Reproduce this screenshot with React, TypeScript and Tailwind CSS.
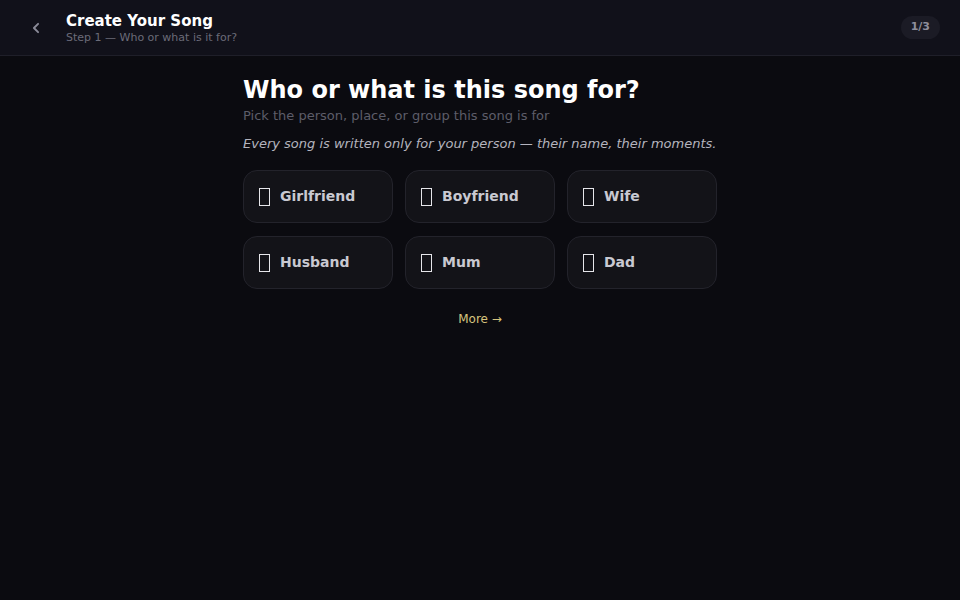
import React from "react";

const options = ["Girlfriend", "Boyfriend", "Wife", "Husband", "Mum", "Dad"];

export default function App() {
  return (
    <div
      className="min-h-[600px] w-full bg-[#0b0b10] text-white"
      style={{ fontFamily: '"DejaVu Sans", sans-serif' }}
    >
      <header className="flex h-[56px] items-center border-b border-[#1f1f29] bg-[#11111a] pl-[26px] pr-[20px]">
        <button className="flex h-[20px] w-[20px] items-center justify-center text-[#8a8a98]">
          <svg width="20" height="20" viewBox="0 0 24 24" fill="none" stroke="currentColor" strokeWidth="2.3" strokeLinecap="round" strokeLinejoin="round">
            <path d="M14.5 17l-5-5 5-5" />
          </svg>
        </button>
        <div className="ml-[20px] flex flex-col">
          <div className="text-[15px] font-bold leading-[20px] text-white">Create Your Song</div>
          <div className="text-[11px] leading-[14px] text-[#6b6b78]">Step 1 — Who or what is it for?</div>
        </div>
        <div className="ml-auto rounded-full bg-[#1b1b25] px-[10px] py-[3px] text-[11px] font-bold text-[#8e8e9c]">1/3</div>
      </header>

      <main className="mx-auto w-[474px] pt-[19px]">
        <h1 className="text-[24px] font-bold leading-[30px] text-white">Who or what is this song for?</h1>
        <p className="mt-[2px] text-[13px] leading-[18px] text-[#5d5d69]">Pick the person, place, or group this song is for</p>
        <p className="mt-[10px] text-[13px] italic leading-[18px] text-[#b4b4be]">
          Every song is written only for your person — their name, their moments.
        </p>
        <div className="mt-[17px] grid grid-cols-3 gap-x-[12px] gap-y-[13px]">
          {options.map((label) => (
            <button
              key={label}
              className="flex h-[53px] items-center gap-[10px] rounded-[14px] border border-[#23232b] bg-[#131318] px-[15px] text-left"
            >
              <span className="box-border block h-[18px] w-[11px] border border-[#e6e6ea]" aria-hidden="true" />
              <span className="text-[14px] font-bold text-[#c9c9d1]">{label}</span>
            </button>
          ))}
        </div>
        <div className="mt-[21px] text-center text-[12px] text-[#d6c47e]">More →</div>
      </main>
    </div>
  );
}
